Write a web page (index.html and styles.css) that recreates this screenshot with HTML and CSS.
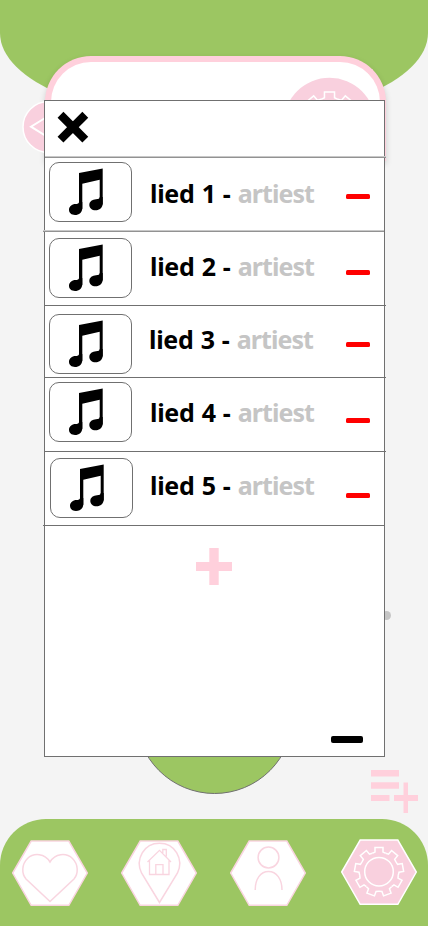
FILE: index.html
```
<!DOCTYPE html>
<html lang="nl">
<head>
<meta charset="utf-8">
<meta name="viewport" content="width=device-width">
<title>Afspeellijst</title>
<link rel="stylesheet" href="styles.css">
</head>
<body>
<svg class="defs" width="0" height="0">
  <defs>
    <path id="tooth" d="M-6.7-18.4-4-19.6V-24.3H4V-19.6L6.7-18.4"/>
    <g id="gear">
      <use href="#tooth"/>
      <use href="#tooth" transform="rotate(40)"/>
      <use href="#tooth" transform="rotate(80)"/>
      <use href="#tooth" transform="rotate(120)"/>
      <use href="#tooth" transform="rotate(160)"/>
      <use href="#tooth" transform="rotate(200)"/>
      <use href="#tooth" transform="rotate(240)"/>
      <use href="#tooth" transform="rotate(280)"/>
      <use href="#tooth" transform="rotate(320)"/>
      <circle r="14.3"/>
    </g>
    <g id="note">
      <path d="M30 11 53.7 6.5V42.5H50.7V17.7L33.3 21.7V47H30Z"/>
      <path d="M33.3 40V46C33.3 50.5 30 53 26 53C22.5 53 20 51 20 47.8C20 44.5 23 42 26.5 42C28.500 42 30 41.500 30 40Z"/>
      <path d="M53.700 35V41.500C53.700 45.500 50.500 48.300 46.500 48.300C43 48.300 40.300 46 40.300 43C40.300 39.500 43.500 37.500 47 37.300C49.500 37.200 50.700 36.500 50.700 35Z"/>
    </g>
    <path id="hex" d="M.7 33 19.200 1H56.800L75.300 33 56.800 65.300H19.200Z"/>
  </defs>
</svg>
<div class="screen">
  <div class="hill"></div>
  <div class="card"></div>
  <svg class="scenery" width="428" height="926" viewBox="0 0 428 926">
    <ellipse cx="329.500" cy="122.500" rx="45.500" ry="44.700" fill="#f9d0de"/>
    <use href="#gear" transform="translate(329.500 122.500) scale(1.260)" fill="none" stroke="#fff" stroke-width="1.200"/>
    <circle cx="48.500" cy="127" r="25.500" fill="#f9d0de" stroke="#fff" stroke-width="1.500"/>
    <path d="M54 112.500 31 126.700 54 141" fill="none" stroke="#fff" stroke-width="2"/>
    <circle cx="386.500" cy="615.500" r="4.500" fill="#c5c5c5"/>
    <circle cx="214.500" cy="715" r="78.500" fill="#9cc662" stroke="#707070"/>
    <g fill="#ffd0dc">
      <path d="M371 770H399V776.500H371ZM371 782.300H399V788.700H371ZM371 795H389.500V801H371Z"/>
      <path d="M403.500 782.500H408V795H418V801H408V813H403.500V801H394V795H403.500Z"/>
    </g>
  </svg>

  <main class="modal">
    <header class="modal-head">
      <svg width="34" height="34" viewBox="0 0 34 34"><path d="M4.500 4.800 29.300 29.600M29.300 4.800 4.500 29.600" stroke="#000" stroke-width="8.300" /></svg>
    </header>
    <hr class="soft">
    <div class="song s1"><svg class="thumb" viewBox="1 1 81 58"><use href="#note"/></svg><p>lied 1 - <span>artiest</span></p><i></i></div>
    <hr class="soft shifted">
    <div class="song s2"><svg class="thumb" viewBox="1 1 81 58"><use href="#note"/></svg><p>lied 2 - <span>artiest</span></p><i></i></div>
    <hr>
    <div class="song s3"><svg class="thumb" viewBox="1 1 81 58"><use href="#note"/></svg><p>lied 3 - <span>artiest</span></p><i></i></div>
    <hr>
    <div class="song s4"><svg class="thumb" viewBox="1 1 81 58"><use href="#note"/></svg><p>lied 4 - <span>artiest</span></p><i></i></div>
    <hr>
    <div class="song s5"><svg class="thumb" viewBox="1 1 81 58"><use href="#note"/></svg><p>lied 5 - <span>artiest</span></p><i></i></div>
    <hr class="shifted">
    <footer class="modal-foot">
      <svg class="add" width="36" height="37" viewBox="0 0 36 37"><path d="M13.300 0H22.700V14H36V23H22.700V37H13.300V23H0V14H13.300Z" fill="#ffd0dc"/></svg>
      <div class="collapse"></div>
    </footer>
  </main>

  <nav class="nav">
    <svg width="76" height="66" viewBox="0 0 76 66">
      <use href="#hex"/>
      <path d="M38 22C33 13.500 22 12.300 15.500 18.500C9.500 24.500 9.500 33.500 14 39L38 61.500 62 39C66.500 33.500 66.500 24.500 60.500 18.500C54 12.300 43 13.500 38 22Z"/>
    </svg>
    <svg width="76" height="66" viewBox="0 0 76 66">
      <use href="#hex"/>
      <path d="M38.500 62.500 20.500 33C14 19 23 3.300 38.500 3.300S63 19 56.500 33Z"/>
      <path d="M26.500 22 38.500 10.300 50 22M28.500 20.500V34.500H48V20.500M34.800 34V24.700H42V34M41.800 13V9.500H45.300V16.500" stroke-width="1.300"/>
    </svg>
    <svg width="76" height="66" viewBox="0 0 76 66">
      <use href="#hex"/>
      <circle cx="38.500" cy="17.500" r="10.400"/>
      <path d="M25.200 50C25.200 39 30.500 31.500 38.500 31.500S52 39 52 50"/>
    </svg>
    <svg class="active" width="76" height="66" viewBox="0 0 76 66">
      <use href="#hex"/>
      <use href="#gear" transform="translate(38 32.700)"/>
    </svg>
  </nav>
</div>
</body>
</html>
```
FILE: styles.css
```
* {
  box-sizing: border-box;
}

body {
  margin: 0;
}

.defs {
  position: absolute;
}

.screen {
  position: relative;
  display: flex;
  flex-direction: column;
  width: 428px;
  height: 926px;
  overflow: hidden;
  background: #f4f4f4;
}

/* backdrop behind the dialog */
.hill {
  position: absolute;
  top: 0;
  left: 0;
  width: 428px;
  height: 121px;
  border-radius: 0 0 214px 214px / 0 0 88px 88px;
  background: #9cc662;
}

.card {
  position: absolute;
  top: 56px;
  left: 45px;
  width: 341px;
  height: 105px;
  border: 6px solid #ffd0dc;
  border-bottom: 0;
  border-radius: 46px 46px 0 0;
  background: #fff;
  box-shadow: 0 3px 6px rgba(0, 0, 0, 0.16);
}

.scenery {
  position: absolute;
  top: 0;
  left: 0;
}

.modal {
  position: relative;
  width: 341px;
  height: 657px;
  margin: 100px 0 0 44px;
  border: 1px solid #707070;
  background: #fff;
}

.modal-head {
  height: 55px;
  padding: 9px 0 0 11px;
}

.modal-head svg {
  display: block;
}

hr {
  width: 341px;
  height: 1px;
  margin: 0;
  border: 0;
  background: #707070;
}

hr.soft {
  height: 2px;
  background: linear-gradient(#c8c8c8 50%, #929292 50%);
}

hr.shifted {
  margin-left: -2px;
}

.song {
  display: flex;
  align-items: flex-start;
  height: 73px;
  padding-left: 4px;
}

.thumb {
  flex: none;
  width: 83px;
  height: 60px;
  margin-top: var(--thumb-y);
  border: 1px solid #707070;
  border-radius: 10px;
}

.song p {
  width: 196px;
  margin: var(--text-y) 0 0 18px;
  font: bold 25px/34px "Noto Sans", "Open Sans", sans-serif;
  white-space: nowrap;
  letter-spacing: -0.3px;
  word-spacing: 1px;
}

.song span {
  color: #c5c5c5;
  letter-spacing: -0.95px;
}

.song i {
  width: 24px;
  height: 5px;
  margin-top: var(--minus-y);
  border-radius: 1.5px;
  background: #f00;
}

.s1 { height: 72px; --thumb-y: 4px; --text-y: 18px; --minus-y: 36px; }
.s2 { --thumb-y: 6px; --text-y: 17px; --minus-y: 38px; }
.s3 { height: 71px; --thumb-y: 8px; --text-y: 16px; --minus-y: 36px; }
.s3 p { width: 197px; margin-left: 17px; }
.s4 { --thumb-y: 4px; --text-y: 17px; --minus-y: 40px; }
.s5 { padding-left: 5px; --thumb-y: 6px; --text-y: 16px; --minus-y: 41px; }
.s5 p { margin-left: 17px; }

.modal-foot {
  display: flex;
  flex-direction: column;
  height: 230px;
  padding: 22px 21px 13px 151px;
  justify-content: space-between;
}

.collapse {
  align-self: flex-end;
  width: 32px;
  height: 7px;
  border-radius: 2px;
  background: #000;
}

.nav {
  position: relative;
  display: flex;
  gap: 33px;
  height: 107px;
  margin-top: 62px;
  padding: 21px 0 0 11.5px;
  border-radius: 46px 46px 0 0;
  background: #9cc662;
}

.nav svg {
  flex: none;
  fill: #fff;
  stroke: #f9d5e0;
  stroke-width: 1.5px;
}

.nav .active {
  margin: -1px 0 0 2px;
  fill: #f9d0de;
  stroke: #fff;
}
```
